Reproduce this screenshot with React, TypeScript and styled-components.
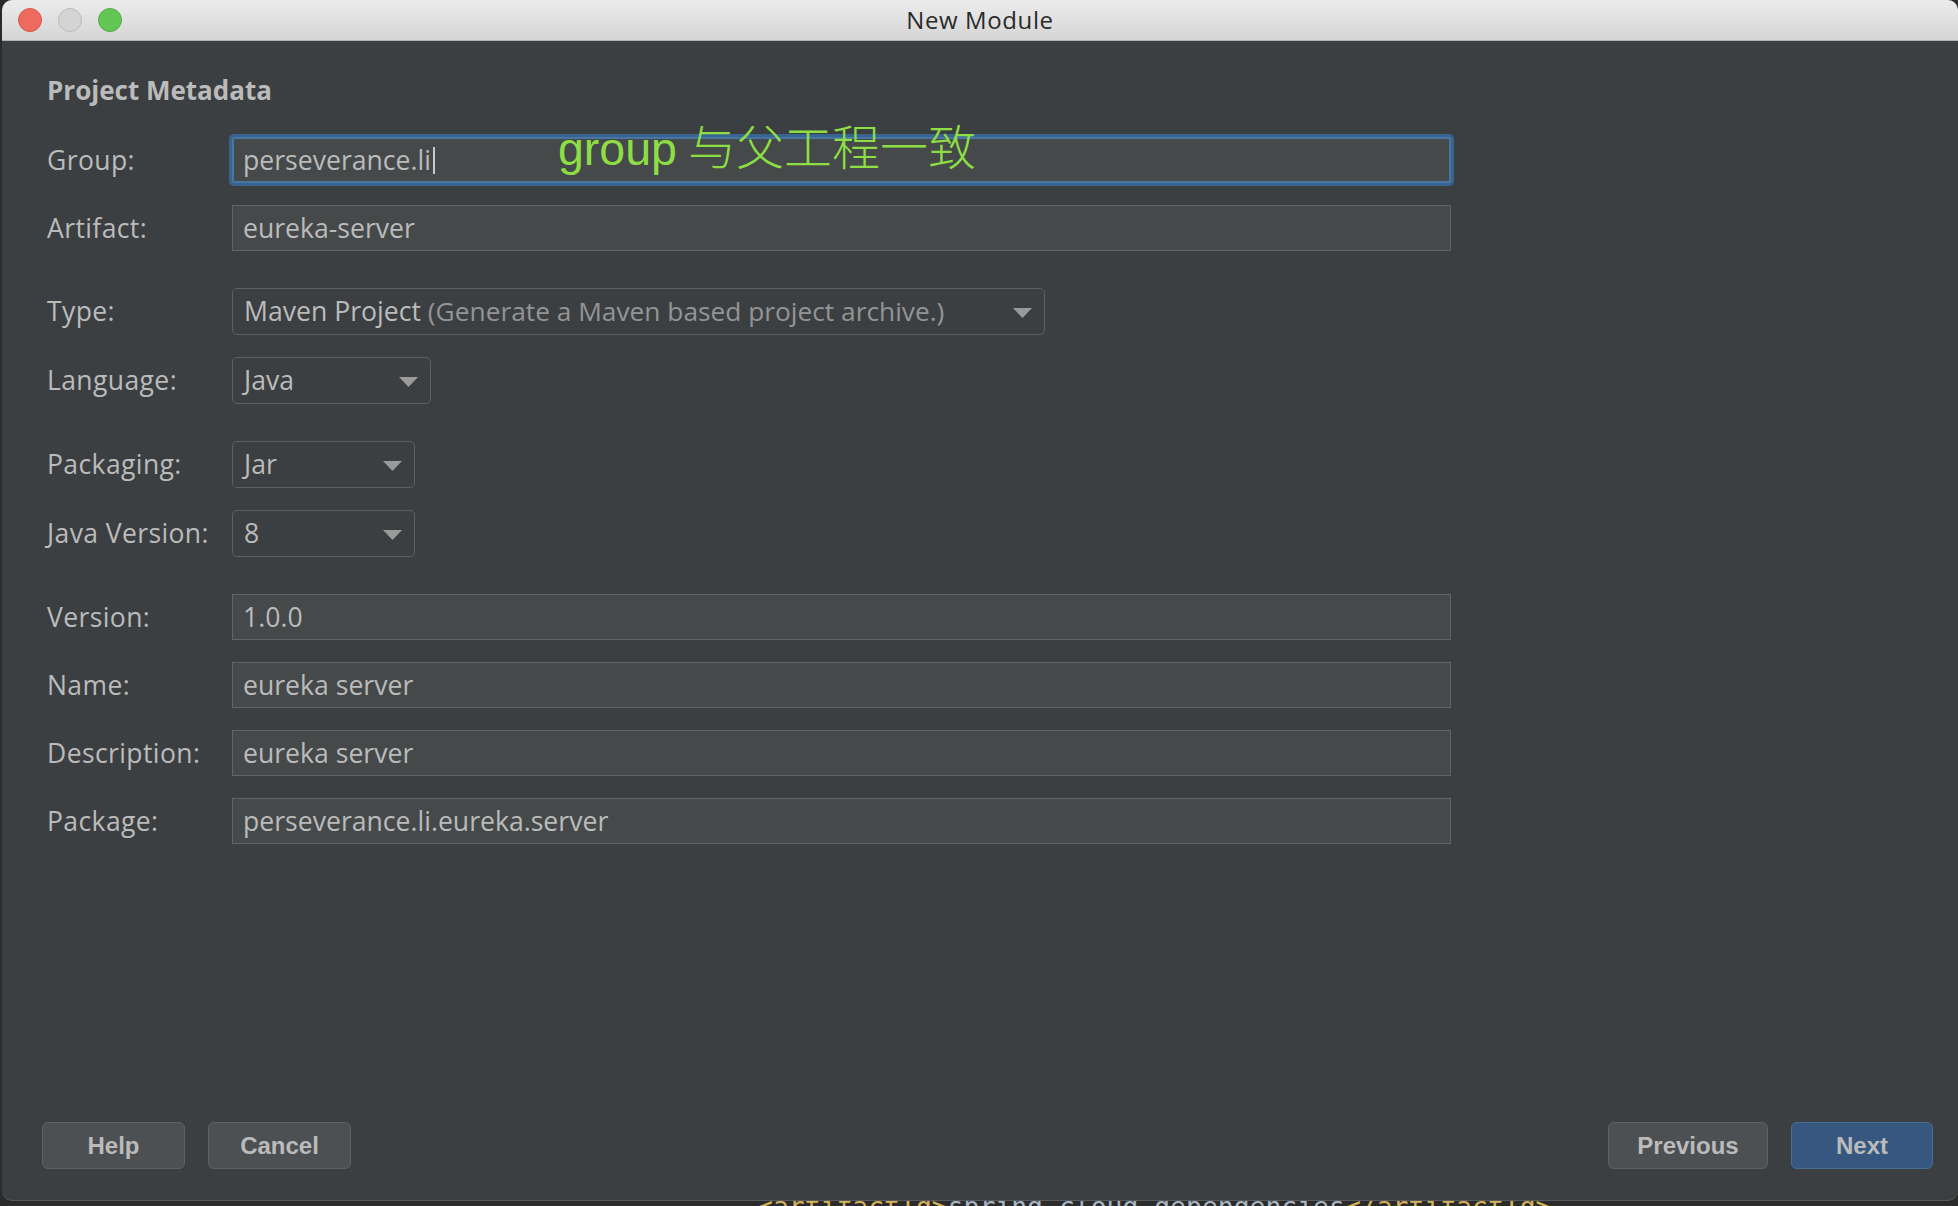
import React from "react";
import styled, { createGlobalStyle } from "styled-components";

const Global = createGlobalStyle`
  html, body { margin: 0; padding: 0; background: #2b2b2b; }
  body { width: 1958px; height: 1206px; overflow: hidden; font-family: "Open Sans", sans-serif; }
`;

const Screen = styled.div`
  width: 1958px;
  height: 1206px;
  display: flex;
  flex-direction: column;
  background: #2b2b2b;
  overflow: hidden;
`;

const Window = styled.div`
  margin-left: 2px;
  height: 1201px;
  flex: none;
  box-sizing: border-box;
  display: flex;
  flex-direction: column;
  background: #3c3f41;
  border-radius: 10px;
  border-bottom: 1px solid #57595b;
  overflow: hidden;
`;

const TitleBar = styled.div`
  height: 41px;
  flex: none;
  box-sizing: border-box;
  display: grid;
  grid-template-columns: 1fr auto 1fr;
  align-items: center;
  background: linear-gradient(#ececec, #d5d5d5);
  border-bottom: 1px solid #b2b2b2;
`;

const Lights = styled.div`
  display: flex;
  gap: 16px;
  padding-left: 16px;
`;

const Light = styled.span<{ $fill: string; $edge: string }>`
  width: 24px;
  height: 24px;
  box-sizing: border-box;
  border-radius: 50%;
  background: ${(p) => p.$fill};
  border: 1px solid ${(p) => p.$edge};
`;

const Title = styled.div`
  font-family: "Open Sans", sans-serif;
  font-size: 24px;
  letter-spacing: 0.6px;
  color: #2a2a2a;
  line-height: 1;
`;

const Body = styled.div`
  flex: none;
  display: flex;
  flex-direction: column;
  padding: 32px 0 0 45px;
`;

const Heading = styled.div`
  font-family: "Open Sans", sans-serif;
  font-weight: 700;
  font-size: 26px;
  line-height: 34px;
  color: #bbbbbb;
  margin-bottom: 30px;
`;

const Form = styled.div`
  display: flex;
  flex-direction: column;
`;

const Row = styled.div<{ $gap: number }>`
  display: grid;
  grid-template-columns: 185px auto;
  align-items: center;
  margin-top: ${(p) => p.$gap}px;
`;

const Label = styled.div`
  font-size: 26.5px;
  letter-spacing: 0.4px;
  line-height: 1;
  color: #bbbbbb;
  white-space: nowrap;
`;

const Field = styled.div<{ $focused?: boolean }>`
  position: relative;
  width: 1219px;
  height: 46px;
  box-sizing: border-box;
  display: flex;
  align-items: center;
  padding-left: ${(p) => (p.$focused ? "9px" : "10px")};
  background: #45494a;
  border: ${(p) => (p.$focused ? "2px solid #4876a4" : "1px solid #646464")};
  box-shadow: ${(p) => (p.$focused ? "0 0 0 3px #3a6490" : "none")};
  border-radius: ${(p) => (p.$focused ? "2px" : "0")};
  font-size: 26.6px;
  line-height: 1;
  color: #bbbbbb;
  white-space: nowrap;
`;

const Caret = styled.span`
  display: inline-block;
  width: 2px;
  height: 27px;
  margin-left: 2px;
  background: #c8c8c8;
`;

const Note = styled.div`
  position: absolute;
  left: 324px;
  top: -18px;
  font-family: "Noto Sans CJK SC", sans-serif;
  font-size: 48px;
  line-height: 47px;
  color: #8ddd45;
  white-space: nowrap;
  pointer-events: none;
`;

const NoteLatin = styled.span`
  font-family: "Liberation Sans", Arial, sans-serif;
  font-size: 46.5px;
`;

const NoteHan = styled.span`
  font-family: "Noto Sans CJK SC", sans-serif;
  font-weight: 300;
  margin-left: 11px;
`;

const Combo = styled.div<{ $width: number }>`
  position: relative;
  width: ${(p) => p.$width}px;
  height: 47px;
  box-sizing: border-box;
  display: flex;
  align-items: center;
  padding-left: 11px;
  background: #3c3f41;
  border: 1px solid #5e6163;
  border-radius: 5px;
  font-size: 26.6px;
  line-height: 1;
  color: #bbbbbb;
  white-space: nowrap;
`;

const Hint = styled.span`
  color: #949494;
  margin-left: 7px;
  font-size: 26.3px;
`;

const Arrow = styled.svg`
  position: absolute;
  right: 12px;
  top: 19px;
`;

const Footer = styled.div`
  margin-top: auto;
  display: flex;
  justify-content: space-between;
  padding: 0 25px 31px 40px;
`;

const ButtonGroup = styled.div`
  display: flex;
  gap: 23px;
`;

const Button = styled.button<{ $width: number; $primary?: boolean }>`
  width: ${(p) => p.$width}px;
  height: 47px;
  box-sizing: border-box;
  padding: 0;
  border-radius: 6px;
  border: 1px solid ${(p) => (p.$primary ? "#4a6f96" : "#5e6163")};
  background: ${(p) => (p.$primary ? "#365880" : "#4c5052")};
  color: #bbbbbb;
  font-family: "Liberation Sans", Arial, sans-serif;
  font-weight: 700;
  font-size: 24px;
  line-height: 1;
  cursor: default;
`;

const Editor = styled.div`
  height: 5px;
  flex: none;
  overflow: hidden;
  padding-left: 757px;
`;

const Code = styled.div`
  margin-top: -7px;
  font-family: "DejaVu Sans Mono", monospace;
  font-size: 26.4px;
  line-height: 26px;
  white-space: pre;
  color: #a9b7c6;
`;

const Tag = styled.span`
  color: #d6b25a;
`;

const DropArrow = () => (
  <Arrow width="19" height="10" viewBox="0 0 19 10">
    <polygon points="0,0 19,0 9.5,10" fill="#9a9a9a" />
  </Arrow>
);

export default function App() {
  return (
    <Screen>
      <Global />
      <Window>
        <TitleBar>
          <Lights>
            <Light $fill="#ee6a5f" $edge="#d5584c" />
            <Light $fill="#d4d4d4" $edge="#bababa" />
            <Light $fill="#62c655" $edge="#52ad43" />
          </Lights>
          <Title>New Module</Title>
          <div />
        </TitleBar>
        <Body>
          <Heading>Project Metadata</Heading>
          <Form>
            <Row $gap={0}>
              <Label>Group:</Label>
              <Field $focused>
                perseverance.li
                <Caret />
                <Note>
                  <NoteLatin>group</NoteLatin>
                  <NoteHan>与父工程一致</NoteHan>
                </Note>
              </Field>
            </Row>
            <Row $gap={22}>
              <Label>Artifact:</Label>
              <Field>eureka-server</Field>
            </Row>
            <Row $gap={37}>
              <Label>Type:</Label>
              <Combo $width={813}>
                Maven Project<Hint>(Generate a Maven based project archive.)</Hint>
                <DropArrow />
              </Combo>
            </Row>
            <Row $gap={22}>
              <Label>Language:</Label>
              <Combo $width={199}>
                Java
                <DropArrow />
              </Combo>
            </Row>
            <Row $gap={37}>
              <Label>Packaging:</Label>
              <Combo $width={183}>
                Jar
                <DropArrow />
              </Combo>
            </Row>
            <Row $gap={22}>
              <Label>Java Version:</Label>
              <Combo $width={183}>
                8
                <DropArrow />
              </Combo>
            </Row>
            <Row $gap={37}>
              <Label>Version:</Label>
              <Field>1.0.0</Field>
            </Row>
            <Row $gap={22}>
              <Label>Name:</Label>
              <Field>eureka server</Field>
            </Row>
            <Row $gap={22}>
              <Label>Description:</Label>
              <Field>eureka server</Field>
            </Row>
            <Row $gap={22}>
              <Label>Package:</Label>
              <Field>perseverance.li.eureka.server</Field>
            </Row>
          </Form>
        </Body>
        <Footer>
          <ButtonGroup>
            <Button $width={143}>Help</Button>
            <Button $width={143}>Cancel</Button>
          </ButtonGroup>
          <ButtonGroup>
            <Button $width={160}>Previous</Button>
            <Button $width={142} $primary>
              Next
            </Button>
          </ButtonGroup>
        </Footer>
      </Window>
      <Editor>
        <Code>
          <Tag>&lt;artifactId&gt;</Tag>spring-cloud-dependencies<Tag>&lt;/artifactId&gt;</Tag>
        </Code>
      </Editor>
    </Screen>
  );
}
